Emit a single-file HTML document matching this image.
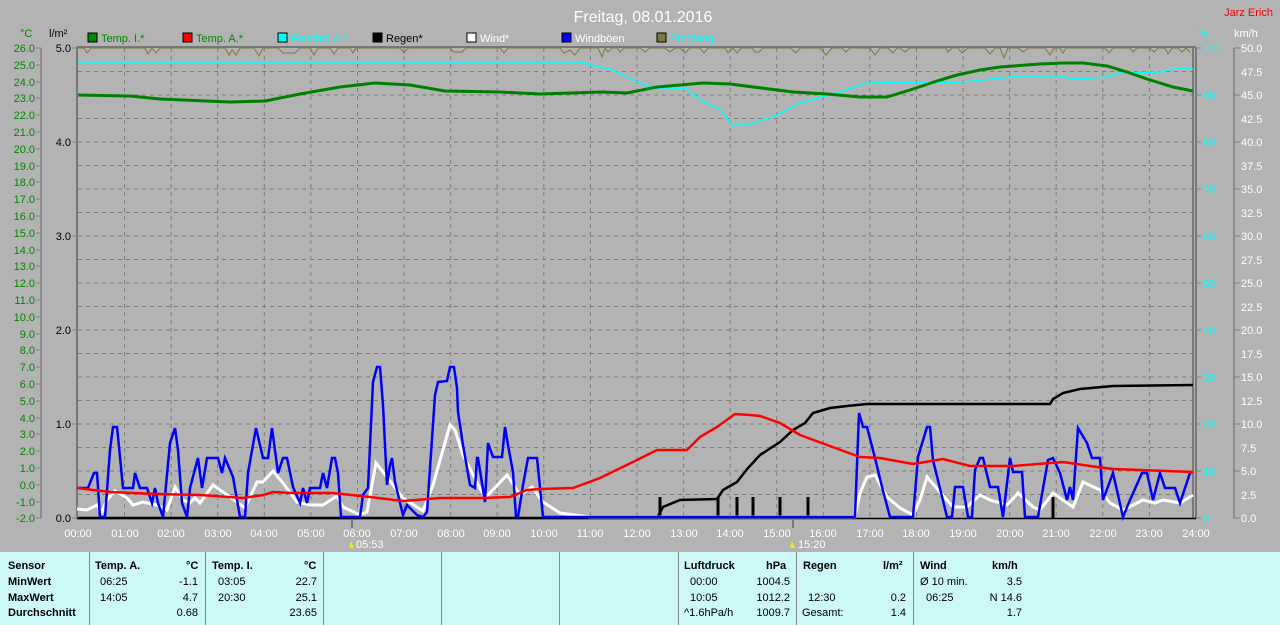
<!DOCTYPE html>
<html><head><meta charset="utf-8"><style>
html,body{margin:0;padding:0;width:1280px;height:625px;overflow:hidden;background:#b3b3b3;font-family:"Liberation Sans",sans-serif;}
svg{position:absolute;left:0;top:0}
.tbl{position:absolute;left:0;top:552px;width:1280px;height:73px;background:#ccf8f7;font-size:11px;color:#000}
.tbl div{position:absolute;white-space:nowrap}
.b{font-weight:bold}
.v{position:absolute;top:0;width:1px;height:73px;background:#888}
</style></head><body>
<svg width="1280" height="552" xmlns="http://www.w3.org/2000/svg" font-family="Liberation Sans, sans-serif">
<text x="643" y="22" fill="#fff" font-size="16" text-anchor="middle">Freitag, 08.01.2016</text>
<text x="1273" y="16" fill="#e00" font-size="11" text-anchor="end">Jarz Erich</text>
<g font-size="11">
<text x="20" y="37" fill="#080">°C</text><text x="49" y="37" fill="#000">l/m²</text>
<text x="1199" y="37" fill="#0ff">%</text><text x="1234" y="37" fill="#fff">km/h</text>
<rect x="88" y="33" width="9" height="9" fill="#080" stroke="#000"/><text x="101" y="42" fill="#080">Temp. I.*</text>
<rect x="183" y="33" width="9" height="9" fill="#f00" stroke="#000"/><text x="196" y="42" fill="#080">Temp. A.*</text>
<rect x="278" y="33" width="9" height="9" fill="#0ff" stroke="#000"/><text x="291" y="42" fill="#0ff">Feuchte A.*</text>
<rect x="373" y="33" width="9" height="9" fill="#000" stroke="#000"/><text x="386" y="42" fill="#000">Regen*</text>
<rect x="467" y="33" width="9" height="9" fill="#fff" stroke="#000"/><text x="480" y="42" fill="#fff">Wind*</text>
<rect x="562" y="33" width="9" height="9" fill="#00f" stroke="#000"/><text x="575" y="42" fill="#fff">Windböen</text>
<rect x="657" y="33" width="9" height="9" fill="#7a7a40" stroke="#000"/><text x="670" y="42" fill="#0ff">Empfang</text>
</g>
<g stroke="#7d7d7d" stroke-dasharray="4,4" stroke-width="1">
<path d="M78 71.5H1193M78 95H1193M78 118.5H1193M78 142H1193M78 165.5H1193M78 189H1193M78 212.5H1193M78 236H1193M78 259.5H1193M78 283H1193M78 306.5H1193M78 330H1193M78 353.5H1193M78 377H1193M78 400.5H1193M78 424H1193M78 447.5H1193M78 471H1193M78 494.5H1193"/>
<path d="M124.6 48V518M171.2 48V518M217.7 48V518M264.3 48V518M310.9 48V518M357.5 48V518M404.1 48V518M450.7 48V518M497.2 48V518M543.8 48V518M590.4 48V518M637 48V518M683.6 48V518M730.2 48V518M776.7 48V518M823.3 48V518M869.9 48V518M916.5 48V518M963.1 48V518M1009.7 48V518M1056.2 48V518M1102.8 48V518M1149.4 48V518"/>
</g>
<path d="M77 47H1196M77 47V519M1193 47V519M1196 47V519" stroke="#777" stroke-width="2" fill="none"/>
<path d="M77 518.5H1196" stroke="#000" stroke-width="1.5"/>
<path d="M41 48V518M1234 48V518" stroke="#808080" stroke-width="1.5"/>
<g font-size="11" fill="#080" text-anchor="end">
<text x="35" y="52">26.0</text><text x="35" y="69">25.0</text><text x="35" y="86">24.0</text><text x="35" y="102">23.0</text><text x="35" y="119">22.0</text><text x="35" y="136">21.0</text><text x="35" y="153">20.0</text><text x="35" y="170">19.0</text><text x="35" y="186">18.0</text><text x="35" y="203">17.0</text><text x="35" y="220">16.0</text><text x="35" y="237">15.0</text><text x="35" y="254">14.0</text><text x="35" y="270">13.0</text><text x="35" y="287">12.0</text><text x="35" y="304">11.0</text><text x="35" y="321">10.0</text><text x="35" y="338">9.0</text><text x="35" y="354">8.0</text><text x="35" y="371">7.0</text><text x="35" y="388">6.0</text><text x="35" y="405">5.0</text><text x="35" y="422">4.0</text><text x="35" y="438">3.0</text><text x="35" y="455">2.0</text><text x="35" y="472">1.0</text><text x="35" y="489">0.0</text><text x="35" y="506">-1.0</text><text x="35" y="522">-2.0</text>
</g>
<g stroke="#808080"><path d="M36 48H41M36 65H41M36 82H41M36 98H41M36 115H41M36 132H41M36 149H41M36 166H41M36 182H41M36 199H41M36 216H41M36 233H41M36 250H41M36 266H41M36 283H41M36 300H41M36 317H41M36 334H41M36 350H41M36 367H41M36 384H41M36 401H41M36 418H41M36 434H41M36 451H41M36 468H41M36 485H41M36 502H41M36 518H41M72 48H77M72 142H77M72 236H77M72 330H77M72 424H77M72 518H77M1196 48H1201M1196 95H1201M1196 142H1201M1196 189H1201M1196 236H1201M1196 283H1201M1196 330H1201M1196 377H1201M1196 424H1201M1196 471H1201M1196 518H1201"/>
<path d="M1234 48H1240M1234 95H1240M1234 142H1240M1234 189H1240M1234 236H1240M1234 283H1240M1234 330H1240M1234 377H1240M1234 424H1240M1234 471H1240M1234 518H1240"/></g>
<g font-size="11" fill="#000" text-anchor="end">
<text x="71" y="52">5.0</text><text x="71" y="146">4.0</text><text x="71" y="240">3.0</text><text x="71" y="334">2.0</text><text x="71" y="428">1.0</text><text x="71" y="522">0.0</text></g>
<g font-size="11" fill="#0ff">
<text x="1202" y="52">100</text><text x="1203" y="99">90</text><text x="1203" y="146">80</text><text x="1203" y="193">70</text><text x="1203" y="240">60</text><text x="1203" y="287">50</text><text x="1203" y="334">40</text><text x="1203" y="381">30</text><text x="1203" y="428">20</text><text x="1203" y="475">10</text><text x="1203" y="522">0</text></g>
<g font-size="11" fill="#fff">
<text x="1241" y="52">50.0</text><text x="1241" y="76">47.5</text><text x="1241" y="99">45.0</text><text x="1241" y="123">42.5</text><text x="1241" y="146">40.0</text><text x="1241" y="170">37.5</text><text x="1241" y="193">35.0</text><text x="1241" y="217">32.5</text><text x="1241" y="240">30.0</text><text x="1241" y="264">27.5</text><text x="1241" y="287">25.0</text><text x="1241" y="311">22.5</text><text x="1241" y="334">20.0</text><text x="1241" y="358">17.5</text><text x="1241" y="381">15.0</text><text x="1241" y="405">12.5</text><text x="1241" y="428">10.0</text><text x="1241" y="452">7.5</text><text x="1241" y="475">5.0</text><text x="1241" y="499">2.5</text><text x="1241" y="522">0.0</text></g>
<g font-size="11" fill="#fff" text-anchor="middle">
<text x="78" y="537">00:00</text><text x="125" y="537">01:00</text><text x="171" y="537">02:00</text><text x="218" y="537">03:00</text><text x="264" y="537">04:00</text><text x="311" y="537">05:00</text><text x="357" y="537">06:00</text><text x="404" y="537">07:00</text><text x="451" y="537">08:00</text><text x="497" y="537">09:00</text><text x="544" y="537">10:00</text><text x="590" y="537">11:00</text><text x="637" y="537">12:00</text><text x="684" y="537">13:00</text><text x="730" y="537">14:00</text><text x="777" y="537">15:00</text><text x="823" y="537">16:00</text><text x="870" y="537">17:00</text><text x="916" y="537">18:00</text><text x="963" y="537">19:00</text><text x="1010" y="537">20:00</text><text x="1056" y="537">21:00</text><text x="1103" y="537">22:00</text><text x="1149" y="537">23:00</text><text x="1196" y="537">24:00</text></g>
<path d="M352 520V528M793 520V528" stroke="#777" stroke-width="2"/>
<path d="M351 541l3 7h-5z" fill="#ee0"/><text x="356" y="548" font-size="11" fill="#fff">05:53</text>
<path d="M792 541l3 7h-5z" fill="#ee0"/><text x="798" y="548" font-size="11" fill="#fff">15:20</text>
<!-- Empfang -->
<polyline fill="none" stroke="#7a7a3c" stroke-width="1" points="78,48 84,48 87,53 91,48 145,48 148,54 152,48 156,53 160,48 225,48 229,55 232,50 236,55 240,48 254,48 259,56 263,48 278,48 283,53 295,53 300,48 310,48 314,55 318,48 330,48 334,54 338,48 350,48 353,53 356,48 400,48 404,53 408,48 450,48 454,52 462,52 466,48 500,48 504,53 508,48 560,48 564,53 570,50 575,55 580,48 598,48 602,57 605,48 608,52 612,48 617,48 620,52 624,48 640,48 645,52 650,48 665,48 670,52 675,48 680,48 685,53 690,48 700,48 704,53 708,48 725,48 728,53 733,48 737,53 741,48 752,48 755,52 759,52 763,48 790,48 796,53 800,48 820,48 826,55 832,48 842,48 846,52 850,48 870,48 875,55 880,48 888,48 893,53 897,48 900,48 905,52 910,48 946,48 948,52 952,48 958,48 962,53 968,48 985,48 990,54 995,48 1000,48 1004,58 1008,48 1018,48 1023,52 1028,48 1045,48 1050,55 1054,48 1060,48 1063,53 1066,48 1105,48 1109,53 1113,48 1130,48 1133,52 1137,48 1150,48 1154,52 1158,48 1165,48 1168,54 1172,48 1178,48 1182,52 1186,48 1190,52"/>
<!-- Feuchte -->
<polyline fill="none" stroke="#0ff" stroke-width="1.5" points="78,62 583,62 590,65 610,69 627,77 640,83 660,89 687,89 700,100 720,110 733,125 747,125 777,115 800,103 833,94 867,83 920,82 940,83 973,81 1020,76 1063,76 1073,79 1107,77 1120,73 1160,72 1173,69 1193,69"/>
<!-- Temp I -->
<polyline fill="none" stroke="#008000" stroke-width="3" points="78,95 130,96 160,99 230,102 265,101 300,94 340,87 375,83 410,85 445,91 500,92 540,94 602,92 627,93 657,87 703,83 730,84 793,92 827,94 860,97 887,97 910,90 940,80 957,75 980,70 1000,67 1040,64 1063,63 1083,63 1107,66 1127,72 1147,79 1173,87 1193,91"/>
<!-- Regen -->
<path d="M660 497V518M718 497V518M737 497V518M753 497V518M780 497V518M808 497V518M1053 497V518" stroke="#000" stroke-width="3"/>
<polyline fill="none" stroke="#000" stroke-width="2.5" points="78,518 657,518 663,507 680,500 717,499 723,490 737,482 748,468 760,455 780,442 793,430 805,423 813,413 830,408 847,406 867,404 1050,404 1053,399 1063,393 1080,389 1113,386 1193,385"/>
<!-- Wind -->
<polyline fill="none" stroke="#fff" stroke-width="3" points="77,509 87,510 97,505 102,512 107,500 115,491 127,498 133,505 143,502 157,505 167,510 175,487 183,500 190,503 195,498 200,503 213,485 230,497 245,508 257,482 263,482 273,471 283,483 297,502 310,505 323,505 337,496 343,507 360,515 367,512 376,463 393,485 403,498 423,511 433,485 450,425 455,430 463,455 485,498 507,475 520,495 532,487 543,502 560,513 590,517 855,517 860,493 867,477 875,475 887,497 900,508 913,515 920,500 927,477 940,492 953,507 967,507 980,495 990,500 1007,505 1018,493 1033,507 1040,510 1053,493 1073,507 1083,482 1100,490 1110,503 1123,510 1143,500 1155,503 1163,500 1180,503 1193,495"/>
<!-- Windboen -->
<polyline fill="none" stroke="#00f" stroke-width="2.5" points="77,488 88,488 94,473 97,473 100,517 105,517 110,450 113,427 117,427 120,457 123,488 133,488 135,473 140,488 147,488 152,503 155,488 158,503 163,517 170,443 175,428 178,450 182,503 187,517 190,488 198,458 202,488 207,458 218,458 222,473 225,458 233,477 240,517 245,517 248,473 256,428 263,458 268,458 272,428 278,473 283,458 287,458 293,487 300,503 303,488 307,503 310,488 320,488 323,473 327,488 332,458 335,458 338,473 341,517 360,517 363,495 368,488 373,382 377,367 380,367 383,405 387,485 390,465 392,458 395,482 403,515 407,505 417,515 423,517 427,512 435,395 438,382 447,381 450,367 454,367 457,388 458,412 463,445 470,485 475,488 477,458 478,458 485,502 488,443 493,457 502,457 505,427 508,445 513,472 516,517 518,517 523,485 528,458 537,458 543,517 855,517 859,413 863,427 867,427 875,458 882,487 890,517 913,517 918,457 927,427 930,427 933,460 947,517 952,517 955,487 963,487 968,517 972,517 975,470 980,458 983,458 990,487 998,487 1003,517 1010,458 1013,472 1022,472 1025,517 1038,517 1048,460 1053,458 1060,473 1067,500 1070,487 1073,500 1078,428 1087,443 1092,458 1100,458 1103,500 1113,473 1123,517 1130,500 1142,473 1147,473 1153,500 1160,473 1165,488 1175,488 1180,503 1190,473 1193,472"/>
<!-- Temp A -->
<polyline fill="none" stroke="#f00" stroke-width="2.5" points="77,488 110,492 157,494 200,495 243,498 263,495 273,492 293,493 333,493 370,497 403,501 440,498 483,498 510,497 527,490 540,489 573,488 600,478 633,462 657,450 687,450 700,437 717,427 735,414 750,415 760,416 780,423 800,435 827,445 860,457 880,458 913,464 943,459 970,466 1013,466 1063,462 1097,467 1113,469 1193,472"/>
</svg>
<div class="tbl">
<div class="v" style="left:89px"></div><div class="v" style="left:205px"></div><div class="v" style="left:323px"></div><div class="v" style="left:441px"></div><div class="v" style="left:559px"></div><div class="v" style="left:678px"></div><div class="v" style="left:796px"></div><div class="v" style="left:913px"></div>
<div class="b" style="left:8px;top:8px">Sensor</div><div class="b" style="left:8px;top:24px">MinWert</div><div class="b" style="left:8px;top:40px">MaxWert</div><div class="b" style="left:8px;top:55px">Durchschnitt</div>
<div class="b" style="left:95px;top:8px">Temp. A.</div><div class="b" style="left:186px;top:8px">°C</div>
<div style="left:100px;top:24px">06:25</div><div style="left:100px;top:40px">14:05</div>
<div style="right:1082px;top:24px">-1.1</div><div style="right:1082px;top:40px">4.7</div><div style="right:1082px;top:55px">0.68</div>
<div class="b" style="left:212px;top:8px">Temp. I.</div><div class="b" style="left:304px;top:8px">°C</div>
<div style="left:218px;top:24px">03:05</div><div style="left:218px;top:40px">20:30</div>
<div style="right:963px;top:24px">22.7</div><div style="right:963px;top:40px">25.1</div><div style="right:963px;top:55px">23.65</div>
<div class="b" style="left:684px;top:8px">Luftdruck</div><div class="b" style="left:766px;top:8px">hPa</div>
<div style="left:690px;top:24px">00:00</div><div style="left:690px;top:40px">10:05</div><div style="left:684px;top:55px">^1.6hPa/h</div>
<div style="right:490px;top:24px">1004.5</div><div style="right:490px;top:40px">1012.2</div><div style="right:490px;top:55px">1009.7</div>
<div class="b" style="left:803px;top:8px">Regen</div><div class="b" style="left:883px;top:8px">l/m²</div>
<div style="left:808px;top:40px">12:30</div><div style="left:802px;top:55px">Gesamt:</div>
<div style="right:374px;top:40px">0.2</div><div style="right:374px;top:55px">1.4</div>
<div class="b" style="left:920px;top:8px">Wind</div><div class="b" style="left:992px;top:8px">km/h</div>
<div style="left:920px;top:24px">Ø 10 min.</div><div style="left:926px;top:40px">06:25</div>
<div style="right:258px;top:24px">3.5</div><div style="right:258px;top:40px">N 14.6</div><div style="right:258px;top:55px">1.7</div>
</div>
</body></html>
